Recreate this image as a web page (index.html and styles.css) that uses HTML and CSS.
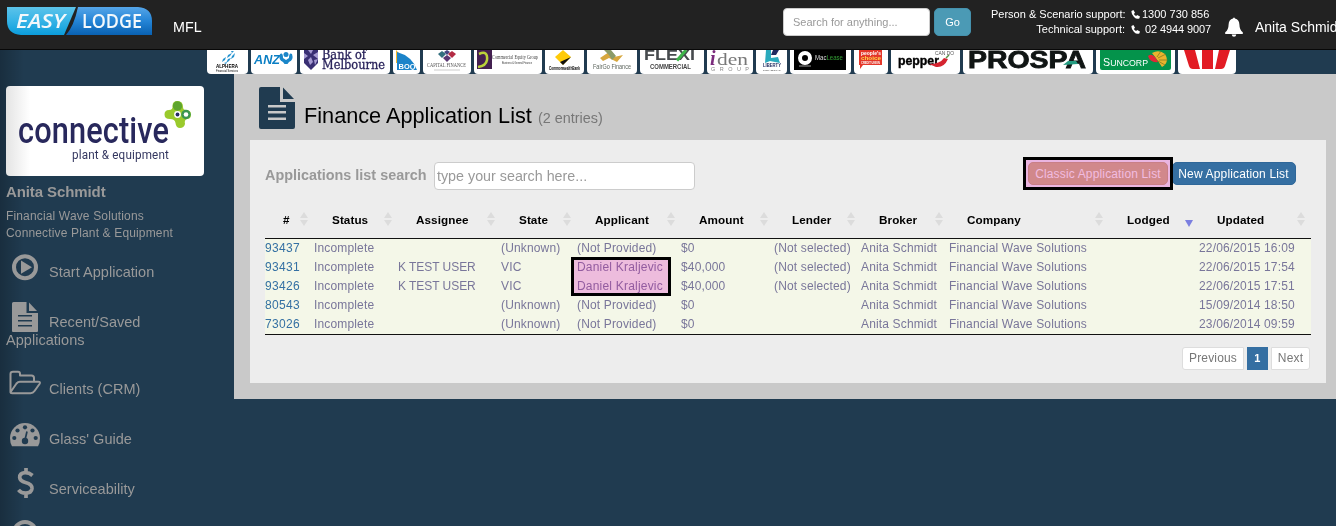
FILE: index.html
```html
<!DOCTYPE html>
<html lang="en">
<head>
<meta charset="utf-8">
<title>Finance Application List</title>
<link rel="stylesheet" href="styles.css">
</head>
<body>
<header class="topbar">
  <svg class="brand" width="146" height="28" viewBox="0 0 146 28">
    <defs>
      <linearGradient id="lb" x1="0" y1="0" x2="0" y2="1"><stop offset="0" stop-color="#5cc3ea"/><stop offset=".5" stop-color="#35b3e6"/><stop offset="1" stop-color="#0b9ddc"/></linearGradient>
      <linearGradient id="db" x1="0" y1="0" x2="0" y2="1"><stop offset="0" stop-color="#55a5e8"/><stop offset=".5" stop-color="#2484d6"/><stop offset="1" stop-color="#0961b2"/></linearGradient>
    </defs>
    <path d="M0 0H69L57 28H14Q0 27 0 14Z" fill="url(#lb)"/>
    <path d="M71 0H131Q145 1 145 14V28H59Q67 19 71 0Z" fill="url(#db)"/>
    <text class="brand-easy" x="9" y="21" textLength="49" lengthAdjust="spacingAndGlyphs">EASY</text>
    <text class="brand-lodge" x="75" y="21" textLength="60" lengthAdjust="spacingAndGlyphs">LODGE</text>
  </svg>
  <span class="org">MFL</span>
  <div class="quick">
    <input class="quick-input" placeholder="Search for anything...">
    <button class="quick-go">Go</button>
  </div>
  <div class="support">
    <span>Person &amp; Scenario support:</span>
    <svg width="9" height="9" viewBox="0 0 9 9"><path d="M.5 1 2.400 0 4 2.800 2.900 4Q3.600 5.600 5.200 6L6.100 5 9 6.400 8.300 8.400Q5.800 9.800 3 7 0 4 .500 1Z" fill="#fff"/></svg>
    <span>1300 730 856</span>
    <span>Technical support:</span>
    <svg width="9" height="9" viewBox="0 0 9 9"><path d="M.5 1 2.400 0 4 2.800 2.900 4Q3.600 5.600 5.200 6L6.100 5 9 6.400 8.300 8.400Q5.800 9.800 3 7 0 4 .500 1Z" fill="#fff"/></svg>
    <span class="tech">02 4944 9007</span>
  </div>
  <svg class="bell" width="18" height="20" viewBox="0 0 18 20"><path d="M8 1.400Q9-.6 10 1.400 14.200 2.400 14.400 7.500 14.500 13 17.800 15.200V17H.2V15.200Q3.500 13 3.600 7.500 3.800 2.400 8 1.400ZM6.700 17.500H11.300Q11 19.800 9 19.800 7 19.800 6.700 17.500Z" fill="#fff"/></svg>
  <span class="user">Anita Schmidt</span>
</header>

<div class="body">
  <aside class="side">
    <div class="company-card">
      <svg width="198" height="90" viewBox="0 0 198 90">
        <text class="conn" x="12" y="57" textLength="151" lengthAdjust="spacingAndGlyphs">connective</text>
        <text class="conn-sub" x="66" y="73" textLength="97" lengthAdjust="spacingAndGlyphs">plant &amp; equipment</text>
        <path d="M171.500 15Q177 15 177 21 177 24 180 24 185 24 185 28.500 185 33 181 33 178 34 179 38 178 42 174 42 170 42 169.500 37 169 33 164 33 158.500 33 158.500 28.500 158.500 24 163 24 167 24 166.500 20 166.500 15 171.500 15Z" fill="#9aca2c"/>
        <circle cx="171.500" cy="20" r="4.700" fill="#5fa52e"/>
        <circle cx="180" cy="28.500" r="4.700" fill="#3b9650"/><circle cx="180" cy="28.500" r="2.300" fill="#fff"/>
        <circle cx="171.500" cy="28.500" r="3.400" fill="#fff"/><circle cx="171.500" cy="28.500" r="1.900" fill="#262a60"/>
      </svg>
    </div>
    <div class="who">Anita Schmidt</div>
    <div class="orgs">Financial Wave Solutions<br>Connective Plant &amp; Equipment</div>
    <nav>
      <div class="item"><svg width="43" height="34" viewBox="0 0 43 34"><circle cx="19" cy="17.200" r="11" fill="none" stroke="#999" stroke-width="4"/><path d="M15 10.600 26 17.200 15 23.800Z" fill="#999"/></svg><span>Start Application</span></div>
      <div class="item two"><svg width="43" height="34" viewBox="0 0 43 34"><path fill-rule="evenodd" d="M7.500 2H20.500V13H32V31Q32 32 31 32H7Q6 32 6 31V3.500Q6 2 7.500 2ZM12 15V16.500H26V15ZM12 20V21.600H26V20ZM12 25V26.500H26V25ZM23 2.500 31 11H23Z" fill="#999"/></svg><span>Recent/Saved</span><div>Applications</div></div>
      <div class="item"><svg width="43" height="34" viewBox="0 0 43 34"><path d="M4.500 25V7Q4.500 4.700 7 4.700H12Q14 4.700 14 7V8.500H25.500Q28 8.500 28 11V14M4.300 25.500 10.500 16.500Q12 14.700 14 14.700H32Q35 14.700 33.500 17L28.500 24Q27 26.200 24.500 26.200H6Q4.500 26.200 4.300 25" fill="none" stroke="#999" stroke-width="2" stroke-linejoin="round"/></svg><span>Clients (CRM)</span></div>
      <div class="item"><svg width="43" height="34" viewBox="0 0 43 34"><path d="M6 29.300Q4 26 4 21A15 15 0 0 1 34 21Q34 26 32 29.300Z" fill="#999"/><g fill="#203b50"><circle cx="8.300" cy="21" r="2.100"/><circle cx="11.500" cy="13.500" r="2.100"/><circle cx="19" cy="10.300" r="2.100"/><circle cx="26.500" cy="13.500" r="2.100"/><circle cx="29.700" cy="21" r="2.100"/><circle cx="19" cy="24" r="3.200"/></g><path d="M19 23 21 14.500" stroke="#203b50" stroke-width="1.700"/></svg><span>Glass' Guide</span></div>
      <div class="item"><svg width="43" height="34" viewBox="0 0 43 34"><path d="M20 1V6M20 26V31M26.500 8.500Q23 5.500 19 5.700 13.500 6.200 13.700 10.500 14 14 19.500 15.500 26.300 17.200 26 21.500 25.500 26 19.500 26.200 15 26 12.500 22.800" fill="none" stroke="#999" stroke-width="3.700"/></svg><span>Serviceability</span></div>
      <div class="item last"><svg width="43" height="9" viewBox="0 0 43 9"><circle cx="19" cy="16" r="11" fill="none" stroke="#999" stroke-width="4"/></svg></div>
    </nav>
  </aside>

  <main class="main">
    <div class="lenders">
      <svg width="41" height="24"><g fill="#2492cf"><path d="M16 9 19 7 18 10 15 12ZM21 5 25 3 23 6 20 8ZM21 9 24 8 22 11 19 13ZM25 6 28 3 27 7 24 9ZM17 13 20 12 19 14ZM24 1 27 1 25 3Z"/></g><text x="9" y="18" font-size="5.500" font-weight="900" textLength="22" lengthAdjust="spacingAndGlyphs">ALPHERA</text><text x="9" y="21.500" font-size="3" textLength="22" lengthAdjust="spacingAndGlyphs">Financial Services</text></svg>
      <svg width="46" height="24"><text x="3" y="13.500" font-size="12" font-weight="900" font-style="italic" fill="#0b7fc4" textLength="26" lengthAdjust="spacingAndGlyphs">ANZ</text><g fill="#1b86c8"><circle cx="35" cy="4.500" r="2.500"/><path d="M29 4Q32 2 32 8L35 10 38 8Q38 2 41 4 43 10 38 12L36.500 14H33.500L32 12Q27 10 29 4Z"/></g></svg>
      <svg width="90" height="24"><path d="M4 0H18V13L11 20 4 13Z" fill="#392f73"/><path d="M4 3 8 6 4 9ZM18 2 13 5 18 9ZM8 10 11 7 13 12 10 15ZM14 10 18 9 15 15ZM8 0H13L11 4Z" fill="#a69bd2"/><g fill="#29235b" stroke="#29235b" stroke-width=".3" font-size="12" class="slab"><text x="22" y="8.500" textLength="44" lengthAdjust="spacingAndGlyphs">Bank of</text><text x="22" y="19" textLength="63" lengthAdjust="spacingAndGlyphs">Melbourne</text></g></svg>
      <svg width="27" height="24"><path d="M3 0V13H11L16 20H22Z" fill="#f0b92e"/><path d="M4 2V20H24Q19 6 4 2Z" fill="#1b83c9"/><text x="5.500" y="18.500" font-size="8" font-weight="700" fill="#fff" textLength="17" lengthAdjust="spacingAndGlyphs">BOQ</text></svg>
      <svg width="48" height="24"><path d="M24 0 27 2 24 5 21 2Z" fill="#454582"/><path d="M19 1 23 4 19 8 15 4Z" fill="#336f7f"/><path d="M29 1 33 4 29 8 25 4Z" fill="#b32a43"/><path d="M24 5 28 8 24 12 20 8Z" fill="#5a3673"/><text class="serif" x="4" y="17" font-size="6" fill="#555" textLength="39" lengthAdjust="spacingAndGlyphs">CAPITAL FINANCE</text><path d="M11 20H37" stroke="#ccc"/></svg>
      <svg width="68" height="24"><path d="M3 0H18V19H3Z" fill="#432050"/><path d="M5 4Q14 0 13 10 12 16 4 17" fill="none" stroke="#bad23a" stroke-width="2.500"/><text class="serif" x="18" y="9" font-size="6" fill="#444" textLength="46" lengthAdjust="spacingAndGlyphs">Commercial Equity Group</text><text x="28" y="14" font-size="3.500" fill="#333" textLength="30" lengthAdjust="spacingAndGlyphs">Business &amp; General Finance</text></svg>
      <svg width="39" height="24"><path d="M18 0 26 7 18 15 10 7Z" fill="#ffcb08"/><path d="M26 7 18 15 15 12Z" fill="#111"/><text x="4" y="20" font-size="4.500" font-weight="900" textLength="31" lengthAdjust="spacingAndGlyphs">CommonwealthBank</text></svg>
      <svg width="50" height="24"><path d="M13 8 22 2 27 7 36 5 30 12 22 8 16 11Z" fill="#d7a73d"/><path d="M17 0H24L29 6 25 10 22 5Z" fill="#8b9b67"/><text x="6" y="18.500" font-size="6.500" fill="#5c655d" textLength="38" lengthAdjust="spacingAndGlyphs">FairGo Finance</text></svg>
      <svg width="64" height="24"><text x="4" y="10" font-size="15" font-weight="700" fill="#474b4e" textLength="51" lengthAdjust="spacingAndGlyphs">FLEXI</text><path d="M37 10.500 46 0" fill="none" stroke="#3eb54a" stroke-width="3"/><text x="10" y="18.700" font-size="6.500" font-weight="700" fill="#444" textLength="41" lengthAdjust="spacingAndGlyphs">COMMERCIAL</text></svg>
      <svg width="46" height="24"><g class="serif"><text x="3" y="14.500" font-size="20" font-weight="700" font-style="italic" fill="#7b2c7d">i</text><text x="10" y="14.500" font-size="17" fill="#777" textLength="31" lengthAdjust="spacingAndGlyphs">den</text></g><text x="4" y="20.500" font-size="5.500" fill="#888" textLength="38">GROUP</text></svg>
      <svg width="31" height="24"><path d="M10 0H15V8L22 7 24 13 14 11 9 13Z" fill="#29aabd"/><path d="M17 0H23L20 5H15Z" fill="#202b60"/><text x="7" y="17" font-size="4.500" font-weight="900" fill="#202b60" textLength="18" lengthAdjust="spacingAndGlyphs">LIBERTY</text><text x="7" y="20.500" font-size="2.500" fill="#333" textLength="18" lengthAdjust="spacingAndGlyphs">FINANCIAL</text></svg>
      <svg width="61" height="24"><path d="M4 0H56V20H4Z"/><circle cx="15" cy="8" r="5" fill="none" stroke="#fff" stroke-width="4"/><path d="M9 16H21" stroke="#999"/><text x="25" y="10" font-size="6.500" fill="#ddd" textLength="28" lengthAdjust="spacingAndGlyphs">Mac<tspan fill="#329d34">Lease</tspan></text></svg>
      <svg width="34" height="24"><path d="M5 0H28V15H9L6 19V15H5Z" fill="#e43629"/><g fill="#fff" font-weight="700"><text x="7" y="5" font-size="5" textLength="20" lengthAdjust="spacingAndGlyphs">people's</text><text x="7" y="10" font-size="5.500" fill="#ffd84b" textLength="20" lengthAdjust="spacingAndGlyphs">choice</text><text x="7" y="14" font-size="3" textLength="19" lengthAdjust="spacingAndGlyphs">CREDIT UNION</text></g></svg>
      <svg width="69" height="24"><text x="44" y="4.700" font-size="4.500" fill="#555" textLength="19" lengthAdjust="spacingAndGlyphs">CAN DO</text><text x="7" y="15" font-size="13" font-weight="900" stroke="#000" stroke-width=".4" textLength="41" lengthAdjust="spacingAndGlyphs">pepper</text><path d="M38 14Q49 14 53 8L57 9Q53 18 45 17Z" fill="#d52430"/><path d="M55 8 58 5" stroke="#589347" stroke-width="1.500"/></svg>
      <svg width="130" height="24"><text x="5" y="17.500" font-size="23" font-weight="900" fill="#101514" stroke="#101514" stroke-width=".8" textLength="118" lengthAdjust="spacingAndGlyphs">PROSPA</text><path d="M100 15 105 11H113L115 14Z" fill="#249b80"/></svg>
      <svg width="79" height="24"><path d="M4 0H75V18Q75 20 73 20H6Q4 20 4 18Z" fill="#04934b"/><text x="7" y="15.500" font-size="11" fill="#fff" textLength="45" lengthAdjust="spacingAndGlyphs">S<tspan font-size="9">UNCORP</tspan></text><path d="M56 3Q63-1 69 4 74 12 66 17L62 11Z" fill="#eab32e"/><path d="M62 8 70 4M63 10 72 10M62 11 69 15M61 7 65 1" stroke="#79771d" stroke-width=".7"/><path d="M52 6Q57 2 62 12 54 13 52 6Z" fill="#e12736"/></svg>
      <svg width="58" height="24"><path d="M6 0H17L22 19H15Q12 19 11 16ZM24 0H35V19H24ZM41 0H52L47 16Q46 19 43 19H37Z" fill="#e21c24"/></svg>
    </div>

    <section class="page">
      <div class="title">
        <svg width="36" height="42" viewBox="0 0 36 42"><path fill-rule="evenodd" d="M2 0H21V15H36V40Q36 42 34 42H2Q0 42 0 40V2Q0 0 2 0ZM9 18V20.500H27V18ZM9 24V26.500H27V24ZM9 30.500V33H27V30.500ZM24 .5 35 12H24Z" fill="#203b50"/></svg>
        <h1>Finance Application List <small>(2 entries)</small></h1>
      </div>
      <div class="panel">
        <div class="tools">
          <label>Applications list search</label>
          <input class="list-input" placeholder="type your search here...">
          <div class="actions">
            <div class="mark"><button class="btn classic">Classic Application List</button></div>
            <button class="btn new">New Application List</button>
          </div>
        </div>
        <div class="tablewrap">
        <table>
          <colgroup><col class="w49"><col class="w84"><col class="w103"><col class="w76"><col class="w104"><col class="w93"><col class="w87"><col class="w88"><col class="w160"><col class="w90"><col class="w112"></colgroup>
          <thead><tr><th>#</th><th>Status</th><th>Assignee</th><th>State</th><th>Applicant</th><th>Amount</th><th>Lender</th><th>Broker</th><th>Company</th><th class="down">Lodged</th><th>Updated</th></tr></thead>
          <tbody>
            <tr><td><a>93437</a></td><td>Incomplete</td><td></td><td>(Unknown)</td><td>(Not Provided)</td><td>$0</td><td>(Not selected)</td><td>Anita Schmidt</td><td>Financial Wave Solutions</td><td></td><td>22/06/2015 16:09</td></tr>
            <tr><td><a>93431</a></td><td>Incomplete</td><td class="tight">K TEST USER</td><td>VIC</td><td class="hot">Daniel Kraljevic</td><td>$40,000</td><td>(Not selected)</td><td>Anita Schmidt</td><td>Financial Wave Solutions</td><td></td><td>22/06/2015 17:54</td></tr>
            <tr><td><a>93426</a></td><td>Incomplete</td><td class="tight">K TEST USER</td><td>VIC</td><td class="hot">Daniel Kraljevic</td><td>$40,000</td><td>(Not selected)</td><td>Anita Schmidt</td><td>Financial Wave Solutions</td><td></td><td>22/06/2015 17:51</td></tr>
            <tr><td><a>80543</a></td><td>Incomplete</td><td></td><td>(Unknown)</td><td>(Not Provided)</td><td>$0</td><td></td><td>Anita Schmidt</td><td>Financial Wave Solutions</td><td></td><td>15/09/2014 18:50</td></tr>
            <tr><td><a>73026</a></td><td>Incomplete</td><td></td><td>(Unknown)</td><td>(Not Provided)</td><td>$0</td><td></td><td>Anita Schmidt</td><td>Financial Wave Solutions</td><td></td><td>23/06/2014 09:59</td></tr>
          </tbody>
        </table>
        <div class="frame"></div>
        </div>
        <div class="pager"><span class="prev">Previous</span><span class="cur">1</span><span class="next">Next</span></div>
      </div>
    </section>
  </main>
</div>
</body>
</html>
```

FILE: styles.css
```css
* { box-sizing: border-box; }
body { margin: 0; height: 526px; overflow: hidden; background: #203b50; font-family: "Liberation Sans", Arial, sans-serif; font-size: 12px; letter-spacing: .15px; }
svg { display: block; flex: none; }
input, button { font-family: inherit; letter-spacing: inherit; margin: 0; }
.serif { font-family: "Liberation Serif", serif; }
.slab { font-family: "DejaVu Serif", serif; }

.topbar { display: flex; height: 50px; background: #222; border-bottom: 1px solid #080808; color: #fff; overflow: hidden; padding-left: 7px; white-space: nowrap; letter-spacing: 0; }
.brand { margin-top: 7px; }
.brand-easy, .brand-lodge { font: 600 20px "Open Sans", sans-serif; fill: #f3f8fb; }
.brand-easy { font-style: italic; }
.org { width: 610px; padding: 19px 0 0 20px; font-size: 14.3px; line-height: 16px; flex: none; }
.quick { display: flex; gap: 4px; padding-top: 8px; margin-left: 20px; flex: none; }
.quick-input { width: 147px; height: 28px; border: 1px solid #ccc; border-radius: 4px; padding: 0 9px; font-size: 11px; }
input::placeholder { color: #999; opacity: 1; }
.quick-go { width: 37px; height: 28px; border: 1px solid #4591ad; border-radius: 5px; background: #4b9ab5; color: #fff; font-size: 11px; padding: 0; }
.support { display: grid; grid-template-columns: 134px 9px 76px; grid-auto-rows: 15px; column-gap: 6px; align-items: center; margin: 7px 0 0 20px; font-size: 11px; line-height: 15px; flex: none; }
.support span:nth-child(3n+1) { text-align: right; }
.support span:nth-child(3n) { margin-left: -4px; }
.support .tech { margin-left: -1px !important; letter-spacing: -.1px; }
.bell { margin: 17px 0 0 3px; }
.user { margin: 19px 0 0 12px; font-size: 14px; line-height: 16px; }

.body { display: flex; height: 476px; overflow: hidden; }
.side { width: 207px; flex: none; padding: 36px 0 0 6px; color: #999; background: linear-gradient(90deg, rgba(0,0,0,.22), rgba(0,0,0,0) 24px); }
.company-card { width: 198px; height: 90px; border-radius: 4px; background: linear-gradient(90deg, #e4e4e4, #fff 24px); }
.conn { font: 500 36px "Roboto", sans-serif; fill: #28285c; }
.conn-sub { font: 400 12.5px "Roboto", sans-serif; fill: #343760; }
.who { font-size: 15px; font-weight: 700; line-height: 18px; margin-top: 7px; letter-spacing: -.1px; }
.orgs { line-height: 17px; margin-top: 7px; white-space: nowrap; }
nav { margin-top: 8px; }
.item { display: flex; flex-wrap: wrap; height: 50px; font-size: 14.5px; line-height: 16px; letter-spacing: .03px; align-content: flex-start; }
.item span { padding-top: 14px; height: 34px; }
.item.two { height: 67px; }
.item.two div { width: 100%; line-height: 13px; }
.item.last { height: 9px; }

.main { flex: 1; min-width: 0; }
.lenders { display: flex; gap: 3px; height: 24px; }
.lenders svg { background: #fff; border-radius: 0 0 4px 4px; letter-spacing: 0; }
.page { margin-left: 27px; height: 325px; background: #c9c9c9; padding: 13px 10px 16px 16px; }
.title { display: flex; height: 53px; padding-left: 9px; gap: 9px; }
h1 { margin: 17px 0 0; font-size: 21.7px; line-height: 24px; font-weight: 400; color: #000; letter-spacing: 0; }
h1 small { font-size: 14.4px; color: #777; letter-spacing: 0; }
.panel { background: #ededed; height: 243px; padding: 22px 15px 0; }
.tools { display: flex; height: 38px; align-items: flex-start; }
.tools label { width: 169px; font-size: 14.4px; letter-spacing: 0; font-weight: 700; line-height: 26px; color: #999; }
.list-input { width: 261px; height: 28px; border: 1px solid #ccc; border-radius: 4px; padding: 0 2px; font-size: 14.3px; letter-spacing: 0; }
.actions { display: flex; margin-left: auto; margin-right: 15px; }
.mark { border: 3px solid #000; background: #eab5e0; padding: 2px; height: 33px; width: 150px; margin-top: -5px; z-index: 1; }
.btn { display: block; height: 23px; border: 1px solid #2f6799; border-radius: 5px; background: #356fa2; color: #fff; font-size: 12px; line-height: 20px; padding: 0; text-align: center; white-space: nowrap; }
.btn.classic { width: 140px; background: #d1888b; border-color: #c97f87; color: #f1bce0; }
.btn.new { width: 124px; margin-left: -1px; padding-right: 1px; letter-spacing: .15px; }

.tablewrap { position: relative; }
table { width: 1046px; table-layout: fixed; border-collapse: separate; border-spacing: 0; }
.w49 { width: 49px; } .w84 { width: 84px; } .w103 { width: 103px; } .w76 { width: 76px; } .w104 { width: 104px; } .w93 { width: 93px; } .w87 { width: 87px; } .w88 { width: 88px; } .w160 { width: 160px; } .w90 { width: 90px; } .w112 { width: 112px; }
th { position: relative; height: 39px; border-bottom: 1px solid #111; padding: 0 0 0 18px; text-align: left; font-size: 11.7px; letter-spacing: .08px; color: #000; }
th::before, th::after { content: ""; position: absolute; right: 6px; border: 4px solid transparent; }
th::before { top: 8px; border-bottom: 6px solid #dcdcdc; }
th::after { top: 20px; border-top: 6px solid #dcdcdc; }
th.down::before { display: none; }
th.down::after { border-top: 7px solid #7b7fe0; }
td { height: 19px; padding: 0; line-height: 19px; color: #79769a; background: #f4f7e8; white-space: nowrap; }
td.tight { letter-spacing: -.05px; }
td.hot { color: #9779a8; letter-spacing: .2px; }
tr:last-child td { height: 20px; border-bottom: 1px solid #111; }
a { color: #3470a3; letter-spacing: .3px; }
.frame { position: absolute; left: 306px; top: 57px; width: 100px; height: 39px; border: 3px solid #000; background: #f8c2f3; mix-blend-mode: multiply; }
.pager { display: flex; justify-content: flex-end; gap: 3px; margin: 12px 1px 0 0; line-height: 21px; text-align: center; color: #777; }
.pager span { height: 23px; background: #fff; border: 1px solid #ddd; }
.prev { width: 62px; border-radius: 3px 0 0 3px; }
.next { width: 39px; border-radius: 0 3px 3px 0; }
.pager .cur { width: 21px; background: #356fa2; border-color: #356fa2; color: #fff; font-weight: 700; font-size: 11px; }
```
